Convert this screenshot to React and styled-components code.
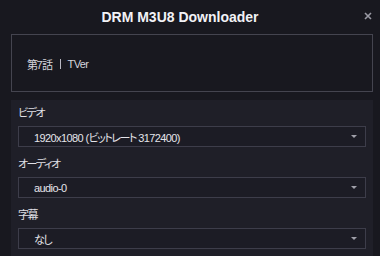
import React from 'react';
import styled, { createGlobalStyle } from 'styled-components';

const GlobalStyle = createGlobalStyle`
    html, body {
        margin: 0;
        padding: 0;
        background: #18181f;
    }
    body {
        font-family: "Liberation Sans", Arial, "Noto Sans CJK JP", sans-serif;
        color: #e2e2e8;
    }
`;

const tracks = [
    { label: 'ビデオ', value: '1920x1080 (ビットレート 3172400)' },
    { label: 'オーディオ', value: 'audio-0' },
    { label: '字幕', value: 'なし' },
];

// wrap japanese runs so they get the tighter cjk face
const mixed = (text) =>
    text.split(/([\u3000-\u30ff\u4e00-\u9fff]+)/).map((part, i) =>
        i % 2 ? <Jp key={i}>{part}</Jp> : part
    );

class App extends React.Component {
    render() {
        return (
            <Page>
                <GlobalStyle />
                <Header>
                    <Title>DRM M3U8 Downloader</Title>
                    <Close width="8" height="8" viewBox="0 0 8 8">
                        <path d="M1 1L7 7M7 1L1 7" stroke="#9a9aa4" strokeWidth="1.6" />
                    </Close>
                </Header>
                <InfoBox>
                    <span>{mixed('第7話')}</span>
                    <Sep />
                    <span>TVer</span>
                </InfoBox>
                <Panel>
                    {tracks.map(t => (
                        <Field key={t.label}>
                            <Label>{mixed(t.label)}</Label>
                            <Select>
                                <span>{mixed(t.value)}</span>
                                <Arrow />
                            </Select>
                        </Field>
                    ))}
                </Panel>
            </Page>
        );
    }
}

export default App;

const Page = styled.div`
    width: 380px;
    height: 256px;
    overflow: hidden;
    padding: 0 7px 0 11px;
    box-sizing: border-box;
    background: #18181f;
`;

const Header = styled.div`
    position: relative;
    height: 34px;
    display: flex;
    align-items: center;
    justify-content: center;
`;

const Title = styled.h1`
    margin: 0;
    padding-right: 24px;
    font-size: 14px;
    font-weight: bold;
    color: #f2f2f6;
`;

const Close = styled.svg`
    position: absolute;
    right: 1px;
    top: 12px;
`;

const Jp = styled.span`
    font-family: "Noto Sans CJK JP", sans-serif;
    font-feature-settings: "palt";
    font-size: 11px;
    letter-spacing: -1.5px;
`;

const InfoBox = styled.div`
    height: 58px;
    border: 1px solid #44444f;
    box-sizing: border-box;
    display: flex;
    align-items: center;
    gap: 7px;
    padding: 1px 15px 0;
    font-size: 11px;
    letter-spacing: -0.6px;
    color: #d4d4dc;
`;

const Sep = styled.i`
    width: 1px;
    height: 10px;
    margin-left: 1px;
    background: #b8b8c2;
`;

const Panel = styled.div`
    margin-top: 8px;
    background: #1f1f28;
    padding: 4px 7px 10px 7px;
    display: flex;
    flex-direction: column;
    gap: 8px;
    height: 160px;
`;

const Field = styled.div`
    display: flex;
    flex-direction: column;
    gap: 5px;
`;

const Label = styled.div`
    font-size: 11px;
    line-height: 16px;
    letter-spacing: -0.6px;
    color: #e0e0e6;
`;

const Select = styled.div`
    height: 21px;
    border: 1px solid #3d3d4a;
    box-sizing: border-box;
    background: #1c1c25;
    display: flex;
    align-items: center;
    justify-content: space-between;
    padding: 0 8px 0 15px;
    font-size: 11px;
    letter-spacing: -0.6px;
    color: #e4e4ea;
`;

const Arrow = styled.i`
    width: 0;
    height: 0;
    border-left: 3px solid transparent;
    border-right: 3px solid transparent;
    border-top: 3px solid #a0a0aa;
`;
